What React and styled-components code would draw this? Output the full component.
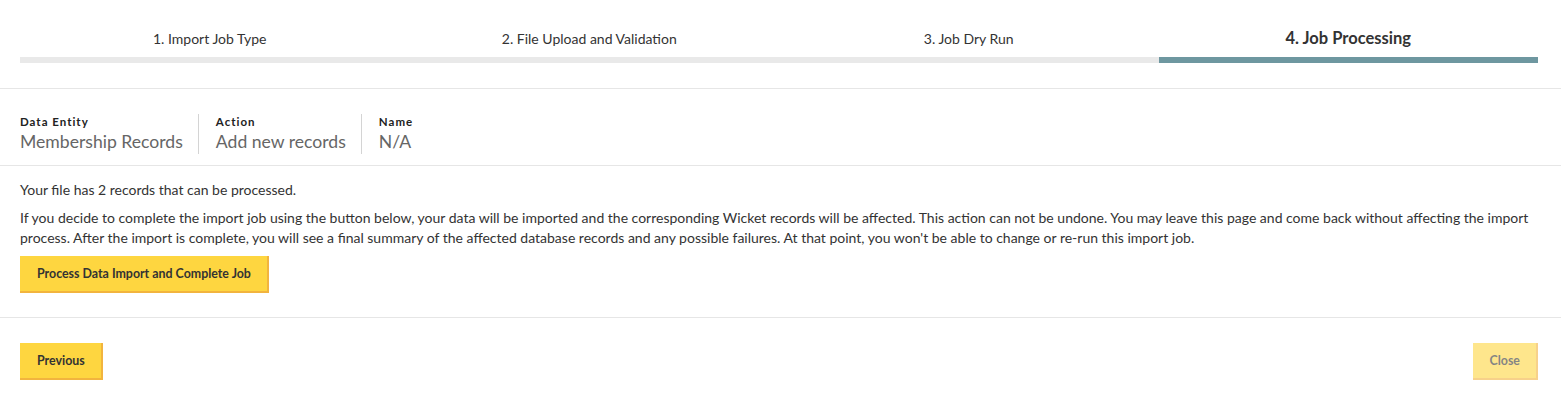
import React from "react";
import styled, { createGlobalStyle } from "styled-components";

const Global = createGlobalStyle`
  html, body { margin: 0; padding: 0; background: #fff; }
  body { font-family: Lato, "Liberation Sans", sans-serif; color: #333; }
  * { box-sizing: border-box; }
`;

const Page = styled.div`
  width: 100%;
`;

const Stepper = styled.div`
  display: grid;
  grid-template-columns: repeat(4, 1fr);
  padding: 28px 23px 25px 20px;
  border-bottom: 1px solid #e6e6e6;
`;

const Step = styled.div`
  display: flex;
  flex-direction: column;
  align-items: center;
`;

const StepLabel = styled.div`
  height: 20px;
  display: flex;
  align-items: center;
  font-size: ${(p) => (p.$active ? "16.5px" : "14px")};
  font-weight: ${(p) => (p.$active ? 700 : 400)};
  color: #333;
  margin-bottom: 9px;
`;

const StepBar = styled.div`
  width: 100%;
  height: 6px;
  background: ${(p) => (p.$active ? "#6e97a0" : "#e9e9e9")};
`;

const InfoRow = styled.div`
  display: flex;
  padding: 25px 20px 11px 20px;
  border-bottom: 1px solid #e6e6e6;
`;

const InfoItem = styled.div`
  display: flex;
  flex-direction: column;
  & + & {
    border-left: 1px solid #d4d4d4;
    padding-left: 17px;
    margin-left: 15px;
  }
`;

const InfoLabel = styled.div`
  font-size: 11.5px;
  font-weight: 700;
  letter-spacing: 1px;
  color: #222;
  line-height: 16px;
`;

const InfoValue = styled.div`
  font-size: 17.6px;
  color: #666;
  line-height: 24px;
`;

const Body = styled.div`
  padding: 14px 20px 24px 20px;
  border-bottom: 1px solid #e6e6e6;
`;

const Para = styled.p`
  margin: 0 0 8px 0;
  font-size: 14px;
  line-height: 20px;
  color: #333;
`;

const Button = styled.button`
  display: block;
  font-family: Lato, "Liberation Sans", sans-serif;
  font-size: 12.4px;
  font-weight: 700;
  color: #333;
  background: #fed640;
  border: none;
  border-right: 2px solid #f2b43e;
  border-bottom: 2px solid #f2b43e;
  height: 37px;
  padding: 0 16px 0 17px;
  cursor: pointer;
  opacity: ${(p) => (p.disabled ? 0.6 : 1)};
`;

const Footer = styled.div`
  display: flex;
  justify-content: space-between;
  padding: 25px 23px 20px 20px;
`;

const steps = [
  "1. Import Job Type",
  "2. File Upload and Validation",
  "3. Job Dry Run",
  "4. Job Processing",
];

export default function App() {
  return (
    <Page>
      <Global />
      <Stepper>
        {steps.map((s, i) => (
          <Step key={s}>
            <StepLabel $active={i === 3}>{s}</StepLabel>
            <StepBar $active={i === 3} />
          </Step>
        ))}
      </Stepper>
      <InfoRow>
        <InfoItem>
          <InfoLabel>Data Entity</InfoLabel>
          <InfoValue>Membership Records</InfoValue>
        </InfoItem>
        <InfoItem>
          <InfoLabel>Action</InfoLabel>
          <InfoValue>Add new records</InfoValue>
        </InfoItem>
        <InfoItem>
          <InfoLabel>Name</InfoLabel>
          <InfoValue>N/A</InfoValue>
        </InfoItem>
      </InfoRow>
      <Body>
        <Para>Your file has 2 records that can be processed.</Para>
        <Para>
          If you decide to complete the import job using the button below, your data will be imported and the
          corresponding Wicket records will be affected. This action can not be undone. You may leave this page
          and come back without affecting the import process. After the import is complete, you will see a final
          summary of the affected database records and any possible failures. At that point, you won't be able to
          change or re-run this import job.
        </Para>
        <Button>Process Data Import and Complete Job</Button>
      </Body>
      <Footer>
        <Button>Previous</Button>
        <Button disabled>Close</Button>
      </Footer>
    </Page>
  );
}
